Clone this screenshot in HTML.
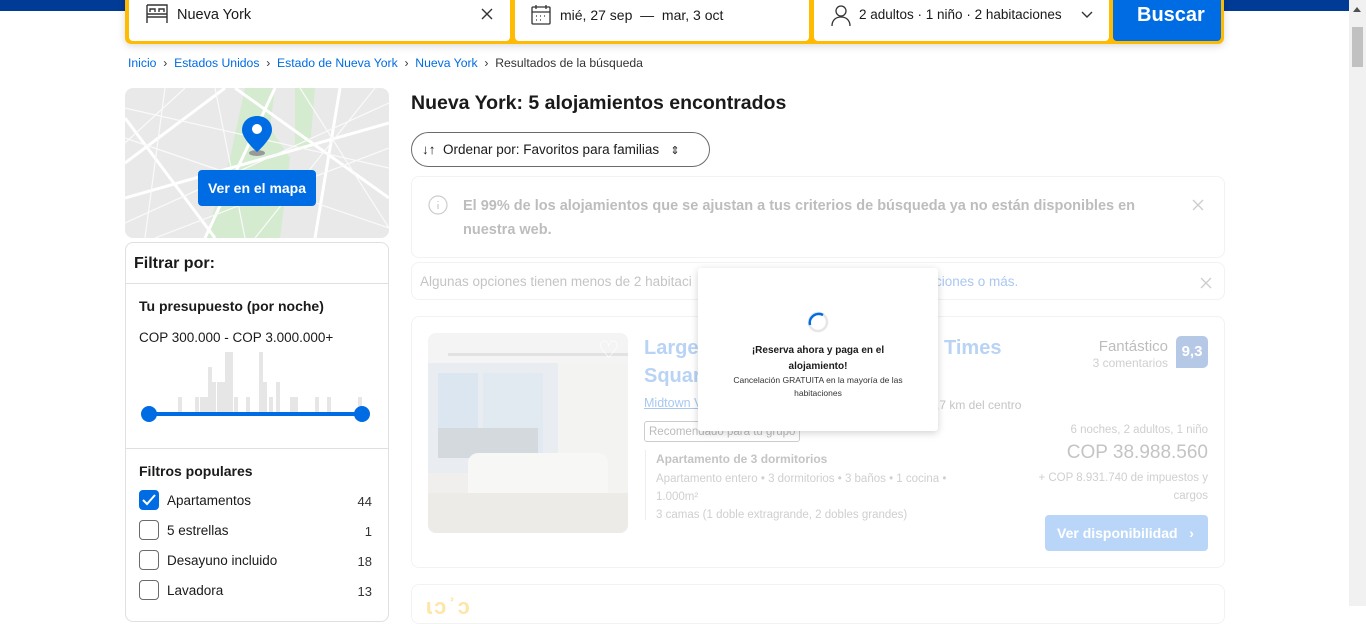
<!DOCTYPE html>
<html><head><meta charset="utf-8"><style>
*{box-sizing:border-box;margin:0;padding:0}
body{width:1366px;height:606px;overflow:hidden;background:#fff;font-family:"Liberation Sans",sans-serif;color:#1a1a1a;position:relative}
.a{position:absolute}
.t{white-space:nowrap}
</style></head><body>
<div class="a" style="left:0;top:0;width:1349px;height:11px;background:#003b95"></div>
<div class="a" style="left:125px;top:-6px;width:1099px;height:50px;background:#febb02;border-radius:6px;box-shadow:0 2px 8px rgba(0,0,0,.15)"></div>
<div class="a" style="left:129px;top:-4px;width:381px;height:45px;background:#fff;border-radius:4px"></div>
<div class="a" style="left:515px;top:-4px;width:294px;height:45px;background:#fff;border-radius:4px"></div>
<div class="a" style="left:814px;top:-4px;width:295px;height:45px;background:#fff;border-radius:4px"></div>
<div class="a" style="left:1113px;top:-4px;width:108px;height:45px;background:#006ce4;border-radius:4px"></div>
<svg class="a" style="left:144px;top:3px" width="26" height="22" viewBox="0 0 26 22" fill="none" stroke="#333" stroke-width="1.4"><path d="M3 2h20v7M3 2v18M23 9v11M3 14h20M3 11h20M6 9V6h5v3M15 9V6h5v3"/></svg>
<div class="a t" style="left:177px;top:7px;font-size:14.5px">Nueva York</div>
<svg class="a" style="left:481px;top:8px" width="12" height="12" stroke="#333" stroke-width="1.4"><path d="M1 1l10 10M11 1L1 11"/></svg>
<svg class="a" style="left:530px;top:4px" width="22" height="22" fill="none" stroke="#333" stroke-width="1.3"><rect x="2" y="3" width="18" height="17" rx="1"/><path d="M2 8h18M6 1v4M16 1v4M6 12h1M10 12h1M14 12h1M6 16h1M10 16h1"/></svg>
<div class="a t" style="left:560px;top:7px;font-size:14px">mié, 27 sep &nbsp;—&nbsp; mar, 3 oct</div>
<svg class="a" style="left:830px;top:4px" width="22" height="22" fill="none" stroke="#333" stroke-width="1.3"><circle cx="11" cy="7" r="5"/><path d="M2 22c0-6 4-9 9-9s9 3 9 9"/></svg>
<div class="a t" style="left:859px;top:7px;font-size:13.5px">2 adultos · 1 niño · 2 habitaciones</div>
<svg class="a" style="left:1081px;top:11px" width="12" height="8" fill="none" stroke="#333" stroke-width="1.4"><path d="M1 1l5 5 5-5"/></svg>
<div class="a t" style="left:1137px;top:4px;font-size:20px;font-weight:bold;color:#fff">Buscar</div>
<div class="a" style="left:1349px;top:0;width:17px;height:606px;background:#f1f1f1"></div>
<div class="a" style="left:1352px;top:27px;width:11px;height:40px;background:#c1c1c1"></div>
<div class="a" style="left:1353px;top:7px;width:0;height:0;border-left:4px solid transparent;border-right:4px solid transparent;border-bottom:5px solid #505050"></div>
<div class="a t" style="left:128px;top:56px;font-size:12.2px;color:#006ce4">Inicio <span style="color:#333">&nbsp;›&nbsp;</span> Estados Unidos <span style="color:#333">&nbsp;›&nbsp;</span> Estado de Nueva York <span style="color:#333">&nbsp;›&nbsp;</span> Nueva York <span style="color:#333">&nbsp;›&nbsp; Resultados de la búsqueda</span></div>
<div class="a" style="left:125px;top:88px;width:264px;height:150px;background:#e9e9e9;border-radius:8px;overflow:hidden">
<svg width="264" height="150"><path d="M120 0h30l-5 40 20 30-10 80h-75l25-80z" fill="#d4ebd0"/><path d="M170 0h20l-5 60h-15z" fill="#d4ebd0"/><g stroke="#fff" stroke-width="3" fill="none"><path d="M0 30L90 150M0 110L264 35M150 0L80 150M215 0L190 150M0 75L100 0M110 0L264 110"/></g><g stroke="#fafafa" stroke-width="1.2" fill="none"><path d="M0 20L264 80M0 135L264 15M40 0L20 150M250 0L130 150M175 0L264 140M60 0L0 55M0 50L264 140M30 150L264 60M90 0L120 150"/></g></svg>
</div>
<svg class="a" style="left:240px;top:114px" width="34" height="44"><ellipse cx="17" cy="39" rx="8" ry="3" fill="#999"/><path d="M17 2C8 2 2 8 2 16c0 9 15 22 15 22s15-13 15-22C32 8 26 2 17 2z" fill="#006ce4"/><circle cx="17" cy="15" r="5" fill="#fff"/></svg>
<div class="a t" style="left:198px;top:170px;width:118px;height:36px;background:#006ce4;border-radius:4px;color:#fff;font-size:14px;font-weight:bold;text-align:center;line-height:36px">Ver en el mapa</div>
<div class="a" style="left:125px;top:242px;width:264px;height:380px;border:1px solid #e0e0e0;border-radius:8px"></div>
<div class="a t" style="left:134px;top:255px;font-size:16px;font-weight:bold">Filtrar por:</div>
<div class="a" style="left:126px;top:283px;width:262px;height:1px;background:#e0e0e0"></div>
<div class="a t" style="left:139px;top:298px;font-size:14px;font-weight:bold">Tu presupuesto (por noche)</div>
<div class="a t" style="left:139px;top:330px;font-size:13.5px">COP 300.000 - COP 3.000.000+</div>
<svg class="a" style="left:120px;top:340px" width="260" height="90"><g fill="#e6e6e6">
<rect x="58" y="57" width="4" height="16"/><rect x="75" y="57" width="4" height="16"/><rect x="80" y="57" width="4" height="16"/><rect x="84" y="57" width="4" height="16"/><rect x="88" y="27" width="4" height="46"/><rect x="92" y="42" width="4" height="31"/><rect x="97" y="42" width="4" height="31"/><rect x="101" y="42" width="4" height="31"/><rect x="105" y="12" width="4" height="61"/><rect x="109" y="12" width="4" height="61"/><rect x="114" y="57" width="4" height="16"/><rect x="126" y="57" width="4" height="16"/><rect x="139" y="12" width="4" height="61"/><rect x="143" y="42" width="4" height="31"/><rect x="149" y="57" width="4" height="16"/><rect x="156" y="42" width="4" height="31"/><rect x="170" y="57" width="4" height="16"/><rect x="174" y="57" width="4" height="16"/><rect x="195" y="57" width="4" height="16"/><rect x="207" y="57" width="4" height="16"/><rect x="238" y="57" width="4" height="16"/></g>
<rect x="29" y="72" width="213" height="4" fill="#006ce4"/><circle cx="29" cy="74" r="8" fill="#006ce4"/><circle cx="242" cy="74" r="8" fill="#006ce4"/></svg>
<div class="a" style="left:126px;top:448px;width:262px;height:1px;background:#e0e0e0"></div>
<div class="a t" style="left:139px;top:463px;font-size:14px;font-weight:bold">Filtros populares</div>
<div class="a" style="left:139px;top:490px;width:20px;height:20px;background:#006ce4;border-radius:4px"></div>
<svg class="a" style="left:142px;top:494px" width="14" height="12" fill="none" stroke="#fff" stroke-width="2"><path d="M1 6l4 4 8-9"/></svg>
<div class="a" style="left:139px;top:520px;width:20px;height:20px;border:1px solid #6b6b6b;border-radius:4px"></div>
<div class="a" style="left:139px;top:550px;width:20px;height:20px;border:1px solid #6b6b6b;border-radius:4px"></div>
<div class="a" style="left:139px;top:580px;width:20px;height:20px;border:1px solid #6b6b6b;border-radius:4px"></div>
<div class="a t" style="left:167px;top:493px;font-size:13.5px">Apartamentos</div>
<div class="a t" style="left:167px;top:523px;font-size:13.5px">5 estrellas</div>
<div class="a t" style="left:167px;top:553px;font-size:13.5px">Desayuno incluido</div>
<div class="a t" style="left:167px;top:583px;font-size:13.5px">Lavadora</div>
<div class="a t" style="left:340px;top:494px;width:32px;text-align:right;font-size:13px;color:#333">44</div>
<div class="a t" style="left:340px;top:524px;width:32px;text-align:right;font-size:13px;color:#333">1</div>
<div class="a t" style="left:340px;top:554px;width:32px;text-align:right;font-size:13px;color:#333">18</div>
<div class="a t" style="left:340px;top:584px;width:32px;text-align:right;font-size:13px;color:#333">13</div>
<div class="a t" style="left:411px;top:92px;font-size:19.5px;font-weight:bold">Nueva York: 5 alojamientos encontrados</div>
<div class="a" style="left:411px;top:132px;width:299px;height:35px;border:1px solid #6b6b6b;border-radius:18px"></div>
<div class="a t" style="left:422px;top:142px;font-size:13.5px">↓↑ &nbsp;Ordenar por: Favoritos para familias &nbsp;&nbsp;<span style="font-size:11px">⇕</span></div>
<div class="a" style="left:411px;top:176px;width:814px;height:82px;border:1px solid #f2f2f2;border-radius:8px"></div>
<svg class="a" style="left:428px;top:195px" width="20" height="20" fill="none" stroke="#ccc" stroke-width="1.2"><circle cx="10" cy="10" r="9"/><path d="M10 9v5M10 6v1"/></svg>
<div class="a" style="left:463px;top:194px;width:712px;font-size:14.5px;font-weight:bold;color:#bdbdbd;line-height:24px">El 99% de los alojamientos que se ajustan a tus criterios de búsqueda ya no están disponibles en nuestra web.</div>
<svg class="a" style="left:1192px;top:199px" width="12" height="12" stroke="#ccc" stroke-width="1.3"><path d="M1 1l10 10M11 1L1 11"/></svg>
<div class="a" style="left:411px;top:262px;width:814px;height:38px;border:1px solid #f2f2f2;border-radius:8px"></div>
<div class="a t" style="left:420px;top:274px;font-size:13.5px;color:#c4c4c4">Algunas opciones tienen menos de 2 habitaci</div>
<div class="a t" style="left:935px;top:274px;font-size:13.5px;color:#a9c8f0">ciones o más.</div>
<svg class="a" style="left:1200px;top:277px" width="12" height="12" stroke="#ccc" stroke-width="1.3"><path d="M1 1l10 10M11 1L1 11"/></svg>
<div class="a" style="left:411px;top:316px;width:814px;height:252px;border:1px solid #f2f2f2;border-radius:8px"></div>
<div class="a" style="left:428px;top:333px;width:200px;height:200px;border-radius:8px;overflow:hidden;background:#f0efed">
<svg width="200" height="200"><rect width="200" height="30" fill="#f4f4f4"/><rect x="0" y="30" width="130" height="110" fill="#e9edf1"/><rect x="10" y="40" width="40" height="80" fill="#dbe6f0"/><rect x="55" y="40" width="60" height="80" fill="#e1e9f1"/><rect x="10" y="95" width="100" height="30" fill="#d3d9dd"/><rect x="130" y="30" width="70" height="150" fill="#f3f3f2"/><rect x="40" y="120" width="140" height="50" rx="10" fill="#f7f7f6"/><rect x="0" y="160" width="200" height="40" fill="#ecebe8"/><rect x="20" y="20" width="180" height="3" fill="#e2e2e2"/></svg>
</div>
<div class="a" style="left:598px;top:340px;width:22px;height:22px;color:#fff;font-size:24px;line-height:22px">♡</div>
<div class="a t" style="left:644px;top:337px;font-size:20px;font-weight:bold;color:#b9d3f5">Large</div>
<div class="a t" style="left:644px;top:365px;font-size:20px;font-weight:bold;color:#b9d3f5">Squar</div>
<div class="a t" style="left:944px;top:337px;font-size:20px;font-weight:bold;color:#b9d3f5">Times</div>
<div class="a t" style="left:644px;top:396px;font-size:12.5px;color:#a9c8f0;text-decoration:underline">Midtown V</div>
<div class="a t" style="left:936px;top:398px;font-size:12px;color:#c4c4c4">,7 km del centro</div>
<div class="a t" style="left:644px;top:421px;height:21px;padding:0 4px;border:1px solid #ccc;border-radius:3px;font-size:11.5px;color:#bbb;line-height:20px">Recomendado para tu grupo</div>
<div class="a" style="left:645px;top:450px;width:1px;height:70px;background:#eee"></div>
<div class="a t" style="left:656px;top:452px;font-size:12px;font-weight:bold;color:#c4c4c4">Apartamento de 3 dormitorios</div>
<div class="a" style="left:656px;top:470px;width:320px;font-size:11.5px;color:#cfcfcf;line-height:18px">Apartamento entero • 3 dormitorios • 3 baños • 1 cocina • 1.000m²<br>3 camas (1 doble extragrande, 2 dobles grandes)</div>
<div class="a t" style="left:1040px;top:338px;width:128px;text-align:right;font-size:15px;color:#bdbdbd">Fantástico</div>
<div class="a t" style="left:1040px;top:356px;width:128px;text-align:right;font-size:12px;color:#cfcfcf">3 comentarios</div>
<div class="a" style="left:1176px;top:336px;width:32px;height:32px;background:#b5c8e6;border-radius:5px 5px 5px 0;color:#fff;font-weight:bold;font-size:15px;text-align:center;line-height:32px">9,3</div>
<div class="a t" style="left:1000px;top:424px;width:208px;text-align:right;font-size:11.5px;color:#cfcfcf">6 noches, 2 adultos, 1 niño</div>
<div class="a t" style="left:1000px;top:442px;width:208px;text-align:right;font-size:19px;color:#c4c4c4">COP 38.988.560</div>
<div class="a" style="left:1030px;top:469px;width:178px;text-align:right;font-size:11.5px;color:#cfcfcf;line-height:18px">+ COP 8.931.740 de impuestos y cargos</div>
<div class="a t" style="left:1045px;top:515px;width:163px;height:36px;background:#b9d6f8;border-radius:4px;color:#fff;font-size:14px;font-weight:bold;line-height:36px;padding-left:12px">Ver disponibilidad &nbsp;&nbsp;›</div>
<div class="a" style="left:411px;top:584px;width:814px;height:40px;border:1px solid #f2f2f2;border-radius:8px"></div>
<div class="a t" style="left:426px;top:594px;font-size:22px;color:#fde6a8;font-weight:bold;letter-spacing:2px">ɩɔʾɔ</div>
<div class="a" style="left:698px;top:268px;width:240px;height:163px;background:#fff;border-radius:3px;box-shadow:0 2px 8px rgba(0,0,0,.18)"></div>
<svg class="a" style="left:806px;top:310px" width="24" height="24" fill="none" stroke-width="2.5"><circle cx="12" cy="12" r="9" stroke="#e6e6e6"/><path d="M4 15A9 9 0 0 1 17 5" stroke="#006ce4"/></svg>
<div class="a" style="left:738px;top:343px;width:160px;text-align:center;font-size:10px;font-weight:bold;line-height:16px">¡Reserva ahora y paga en el alojamiento!</div>
<div class="a" style="left:720px;top:374px;width:196px;text-align:center;font-size:8.5px;line-height:13px;color:#333">Cancelación GRATUITA en la mayoría de las habitaciones</div>
</body></html>
